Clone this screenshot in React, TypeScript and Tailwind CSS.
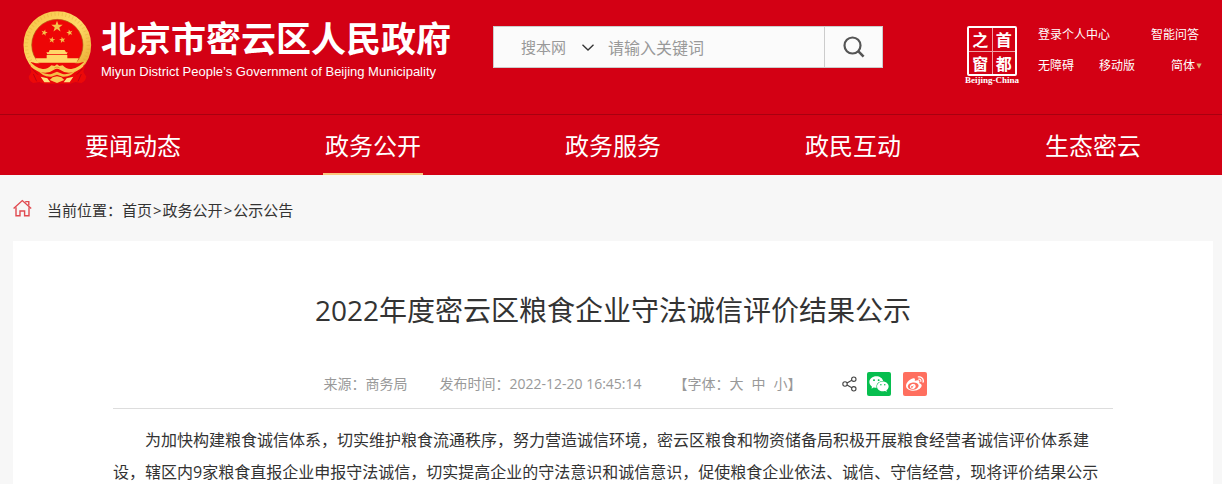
import React, { useState } from 'react';
import { FaWeibo } from 'react-icons/fa';
import { AiFillWechat } from 'react-icons/ai';

// ─── Data ────────────────────────────────────────────────────────────────────

const NAV_ITEMS = ['要闻动态', '政务公开', '政务服务', '政民互动', '生态密云'];
const CRUMBS = ['首页', '政务公开', '公示公告'];
const FONT_SIZES = ['大', '中', '小'];

const STAR = 'M0 -10 L2.4 -3.2 L9.5 -3.1 L3.8 1.2 L5.9 8.1 L0 4 L-5.9 8.1 L-3.8 1.2 L-9.5 -3.1 L-2.4 -3.2 Z';

// ─── Drawings ────────────────────────────────────────────────────────────────

function Emblem() {
  return (
    <svg viewBox="36 30 213 225" className="h-[75px] w-[71px] shrink-0" aria-hidden="true">
      <defs>
        <linearGradient id="gold" x1="0" y1="0" x2="1" y2="1">
          <stop offset="0" stopColor="#f6c445" />
          <stop offset="0.5" stopColor="#ffdc6a" />
          <stop offset="1" stopColor="#e8a62c" />
        </linearGradient>
      </defs>
      <circle cx="142" cy="135" r="89" fill="none" stroke="url(#gold)" strokeWidth="25" />
      <circle cx="142" cy="135" r="93" fill="none" stroke="#d99a2b" strokeWidth="10" strokeDasharray="3 8" opacity="0.3" />
      <circle cx="142" cy="135" r="77" fill="#ee0606" stroke="#b4761e" strokeWidth="2" />
      <g fill="#f5c24a">
        <path d={STAR} transform="translate(141 80) scale(1.8)" />
        <path d={STAR} transform="translate(103 98) rotate(15)" />
        <path d={STAR} transform="translate(179 98) rotate(-15)" />
        <path d={STAR} transform="translate(126 120) rotate(10)" />
        <path d={STAR} transform="translate(157 120) rotate(-10)" />
      </g>
      <g fill="#ffd768">
        <path d="M119 150 H164 L168 157 H173 L170 163 H112 L109 157 H116 Z" />
        <path d="M110 165 H172 V175 H206 L199 188 H83 L76 175 H110 Z" />
      </g>
      {/* ribbons below the ring */}
      <path d="M78 190 H206 L222 186 Q226 200 220 216 L229 230 Q226 244 214 249 L196 246 L180 251 H104 L88 246 L70 249 Q58 244 56 230 L64 216 Q58 200 62 186 Z" fill="#ec0808" />
      <path d="M70 222 L80 244 M214 222 L204 244 M66 206 L84 224 M218 206 L200 224" stroke="#c00010" strokeWidth="3" fill="none" />
      <path d="M56 180 Q74 203 98 207 Q114 208 124 196 L134 198 L141 193 L148 198 L158 196 Q168 208 184 207 Q208 203 228 180 L219 200 Q200 218 176 218 Q160 217 150 209 Q141 204 132 209 Q122 217 106 218 Q82 218 63 200 Z" fill="#f9cb55" />
      <path d="M80 208 Q104 226 124 222 L141 215 L158 222 Q178 226 202 208 Q184 232 158 230 L141 224 L124 230 Q98 232 80 208 Z" fill="#f3bd45" />
      <path d="M92 230 L112 235 L121 247 H103 Z M190 230 L170 235 L161 247 H179 Z" fill="#ffe07d" />
      <path d="M119 240 L128 232 L141 229 L154 232 L163 240 L150 245 L141 249 L132 245 Z" fill="#f9cb55" />
      <path d="M133 204 Q141 198 149 204" stroke="#d18a1e" strokeWidth="2" fill="none" />
    </svg>
  );
}

function CapitalWindowSeal() {
  return (
    <a href="#" className="flex w-14 shrink-0 flex-col items-center" aria-label="首都之窗">
      <span className="grid size-[50px] grid-cols-2 grid-rows-2 gap-px rounded-xs border-2 border-white bg-[#f0a0a6] font-['Noto_Sans_CJK_SC',sans-serif] text-base leading-none font-bold text-white">
        {['之', '首', '窗', '都'].map((char) => (
          <span key={char} className="flex items-center justify-center bg-[#d30014]">
            {char}
          </span>
        ))}
      </span>
      <span className="font-['Liberation_Serif',serif] text-[9px] leading-[9px] font-bold whitespace-nowrap">Beijing-China</span>
    </a>
  );
}

function SearchIcon() {
  return (
    <svg viewBox="0 0 22 22" className="size-[22px]" fill="none" stroke="#555" strokeWidth="2.2" aria-hidden="true">
      <circle cx="9.5" cy="9.5" r="8" />
      <path d="M15.2 15.2 L20.6 20.6" strokeWidth="2.6" />
    </svg>
  );
}

function HomeIcon() {
  return (
    <svg viewBox="0 0 19 18" className="h-[18px] w-[19px]" fill="none" stroke="#e04a50" strokeWidth="1.4" aria-hidden="true">
      <path d="M0.6 9.6 L9.3 1.6 L18.2 9.6" />
      <path d="M3 8.2 V16.8 H7 V12 H11.6 V16.8 H16 V8.2" />
      <path d="M12.2 3.2 L13 2.6 H15.8 V6.4" />
    </svg>
  );
}

function ShareIcon() {
  return (
    <svg viewBox="0 0 15 16" className="h-4 w-[15px]" fill="none" stroke="#444" strokeWidth="1.1" aria-hidden="true">
      <circle cx="3" cy="8" r="2.2" />
      <circle cx="11.8" cy="3.2" r="2.2" />
      <circle cx="11.8" cy="12.8" r="2.2" />
      <path d="M5 7 L9.8 4.3 M5 9 L9.8 11.7" />
    </svg>
  );
}

// ─── Header ──────────────────────────────────────────────────────────────────

function SearchBox() {
  const [keyword, setKeyword] = useState('');

  return (
    <form
      onSubmit={(e) => e.preventDefault()}
      className="mt-[26px] ml-10 flex h-[42px] w-[390px] border border-[#ccc] bg-[#fbfbfb]"
    >
      <div className="relative shrink-0">
        <select aria-label="搜索范围" className="h-full w-[104px] appearance-none bg-transparent pt-px pl-[27px] text-[15px] text-[#999] outline-none">
          <option>搜本网</option>
        </select>
        <svg viewBox="0 0 12 7" className="pointer-events-none absolute top-[17px] right-1 h-[7px] w-3" fill="none" stroke="#333" strokeWidth="1.3" aria-hidden="true">
          <path d="M0.5 0.7 L6 6 L11.5 0.7" />
        </svg>
      </div>
      <input
        type="text"
        aria-label="关键词"
        placeholder="请输入关键词"
        value={keyword}
        onChange={(e) => setKeyword(e.target.value)}
        className="min-w-0 flex-1 bg-transparent pt-0.5 pl-[10px] text-base text-[#333] outline-none placeholder:text-[#999]"
      />
      <button type="submit" aria-label="搜索" className="flex w-[58px] shrink-0 items-center justify-center border-l border-[#ccc]">
        <SearchIcon />
      </button>
    </form>
  );
}

function Header() {
  return (
    <header className="bg-[#d30014] text-white">
      <div className="border-b border-[#a80010] pr-[9px] pl-[13px]">
        <div className="flex h-[114px] items-start">
          <a href="#" className="flex shrink-0 pt-[10px] pl-[9px]">
            <Emblem />
            <span className="ml-2 flex w-[352px] flex-col pt-2">
              <span className="text-[35px] leading-[42px] font-bold whitespace-nowrap">北京市密云区人民政府</span>
              <span className="font-['Liberation_Sans',sans-serif] text-[13px] leading-6 whitespace-nowrap">
                Miyun District People’s Government of Beijing Municipality
              </span>
            </span>
          </a>
          <SearchBox />
          <div className="ml-auto flex shrink-0 gap-[18px] pt-[26px] pr-[11px] text-xs">
            <CapitalWindowSeal />
            <div className="flex w-[164px] flex-col gap-[15px] pt-px leading-4">
              <div className="flex justify-between pr-[3px]">
                <a href="#">登录个人中心</a>
                <a href="#">智能问答</a>
              </div>
              <div className="flex justify-between">
                <span className="flex gap-[25px]">
                  <a href="#">无障碍</a>
                  <a href="#">移动版</a>
                </span>
                <a href="#" className="flex items-center">
                  简体
                  <svg viewBox="0 0 6 6" className="ml-px size-[6px]" fill="#dfae6a" aria-hidden="true">
                    <path d="M0.4 0.4 H5.6 L3 5.8 Z" />
                  </svg>
                </a>
              </div>
            </div>
          </div>
        </div>
      </div>

      <nav className="pr-[9px] pl-[13px]">
        <ul className="grid grid-cols-5 text-2xl">
          {NAV_ITEMS.map((item) => (
            <li key={item} className="flex justify-center">
              <a
                href="#"
                className={`flex h-[60px] w-[100px] items-center justify-center border-b-2 pt-[3px] whitespace-nowrap ${
                  item === '政务公开' ? 'border-[#fbc77e]' : 'border-transparent'
                }`}
              >
                {item}
              </a>
            </li>
          ))}
        </ul>
      </nav>
    </header>
  );
}

// ─── Article ─────────────────────────────────────────────────────────────────

function ArticleMeta() {
  return (
    <div className="flex items-center justify-center border-b border-[#ddd] pb-3 pl-6 text-sm text-[#999]">
      <span>来源：商务局</span>
      <span className="ml-8">发布时间：2022-12-20 16:45:14</span>
      <span className="ml-8 flex">
        【字体：
        <span className="flex gap-2">
          {FONT_SIZES.map((size) => (
            <button key={size} type="button">{size}</button>
          ))}
        </span>
        】
      </span>
      <button type="button" aria-label="分享" className="ml-10">
        <ShareIcon />
      </button>
      <button type="button" aria-label="微信" className="ml-[10px] flex size-6 items-center justify-center rounded-xs bg-[#07be4f] text-white">
        <AiFillWechat className="size-[22px]" />
      </button>
      <button type="button" aria-label="微博" className="ml-3 flex size-6 items-center justify-center rounded-xs bg-[#ff6f5f] text-white">
        <FaWeibo className="size-[18px]" />
      </button>
    </div>
  );
}

export default function App() {
  return (
    <div className="min-h-screen bg-[#f7f7f7] font-['Open_Sans','Noto_Sans_CJK_SC',sans-serif] text-[#333]">
      <Header />

      <main className="pr-[9px] pl-[13px]">
        <div className="flex h-[66px] items-center text-[15px]">
          <HomeIcon />
          <div className="ml-[15px] pt-1">
            当前位置：
            {CRUMBS.map((crumb, i) => (
              <React.Fragment key={crumb}>
                {i > 0 && <span className="mx-px">&gt;</span>}
                <a href="#">{crumb}</a>
              </React.Fragment>
            ))}
          </div>
        </div>

        <article className="bg-white px-[100px] pt-[49px]">
          <h1 className="text-center text-[28px] leading-10">2022年度密云区粮食企业守法诚信评价结果公示</h1>
          <div className="mt-[42px]">
            <ArticleMeta />
          </div>
          <p className="mt-[15px] indent-8 text-base leading-8">
            为加快构建粮食诚信体系，切实维护粮食流通秩序，努力营造诚信环境，密云区粮食和物资储备局积极开展粮食经营者诚信评价体系建设，辖区内9家粮食直报企业申报守法诚信，切实提高企业的守法意识和诚信意识，促使粮食企业依法、诚信、守信经营，现将评价结果公示
          </p>
        </article>
      </main>
    </div>
  );
}
